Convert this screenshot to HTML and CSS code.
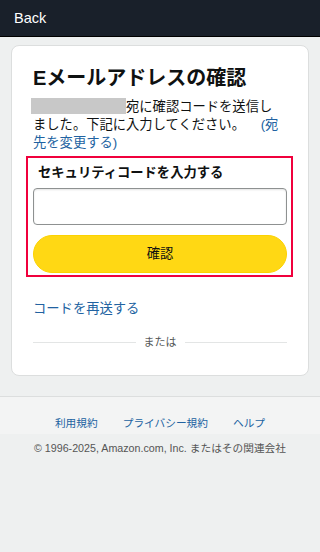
FILE: index.html
```html
<!DOCTYPE html>
<html lang="ja">
<head>
<meta charset="utf-8">
<meta name="viewport" content="width=device-width, initial-scale=1">
<title>Eメールアドレスの確認</title>
<link rel="stylesheet" href="styles.css">
</head>
<body>
<header class="topbar">
  <span class="back">Back</span>
</header>
<main class="page">
  <section class="card">
    <h1 class="title">Eメールアドレスの確認</h1>
    <p class="lead"><span class="redact"></span>宛に確認コードを送信しました。下記に入力してください。 <a class="link change" href="#">(宛先を変更する)</a></p>
    <div class="highlight">
      <label class="field-label" for="code">セキュリティコードを入力する</label>
      <input class="code-input" id="code" type="text">
      <button class="confirm" type="button">確認</button>
    </div>
    <a class="link resend" href="#">コードを再送する</a>
    <div class="divider"><span class="divider-text">または</span></div>
  </section>
</main>
<footer class="footer">
  <nav class="footer-links">
    <a class="link" href="#">利用規約</a>
    <a class="link" href="#">プライバシー規約</a>
    <a class="link" href="#">ヘルプ</a>
  </nav>
  <p class="copyright">© 1996-2025, Amazon.com, Inc. またはその関連会社</p>
</footer>
</body>
</html>
```

FILE: styles.css
```css
* { box-sizing: border-box; }
html, body { margin: 0; padding: 0; }
body {
  width: 320px;
  min-height: 552px;
  background: #eef0f0;
  font-family: "Liberation Sans", "Noto Sans CJK JP", sans-serif;
  color: #0f1111;
  font-size: 13.3px;
}
.topbar {
  height: 37px;
  background: #19202a;
  border-bottom: 1px solid #000;
  display: flex;
  align-items: center;
  padding-left: 14px;
}
.back {
  color: #fff;
  font-size: 14.5px;
  line-height: 18px;
}
.page {
  padding: 8px 11px 0 11px;
}
.card {
  background: #fff;
  border: 1px solid #dcdede;
  border-radius: 8px;
  padding: 20px 21px 24px 21px;
  display: flex;
  flex-direction: column;
}
.title {
  margin: 0;
  font-size: 20px;
  line-height: 24px;
  font-weight: 700;
}
.lead {
  margin: 8px 4px 0 0;
  font-size: 13.3px;
  line-height: 18px;
}
.redact {
  display: inline-block;
  width: 95px;
  height: 16px;
  margin-left: -2px;
  background: #c8c8c8;
  vertical-align: -3px;
}
.link {
  color: #2162a1;
  text-decoration: none;
}
.change {
  margin-left: 12px;
}
.highlight {
  margin: 4px -6px 0 -7px;
  border: 2px solid #f0003c;
  padding: 6px 4px 2px 5px;
  display: flex;
  flex-direction: column;
}
.field-label {
  font-weight: 700;
  font-size: 13.3px;
  line-height: 18px;
  padding-left: 5px;
}
.code-input {
  margin-top: 6px;
  height: 37px;
  border: 1px solid #8e9191;
  border-radius: 4px;
  box-shadow: inset 0 1px 2px rgba(15,17,17,0.12);
  font-size: 14px;
  padding: 0 8px;
  background: #fff;
}
.confirm {
  margin-top: 10px;
  height: 38px;
  border: 1px solid #fcd200;
  border-radius: 19px;
  background: #ffd814;
  color: #0f1111;
  font-family: inherit;
  font-size: 13.3px;
  line-height: 18px;
}
.resend {
  margin-top: 23px;
  line-height: 18px;
  font-size: 13.3px;
}
.divider {
  margin-top: 15px;
  display: flex;
  align-items: center;
  gap: 8px;
}
.divider::before, .divider::after {
  content: "";
  flex: 1;
  height: 1px;
  background: #e3e5e5;
}
.divider-text {
  color: #565959;
  font-size: 11px;
  line-height: 18px;
}
.footer {
  margin-top: 20px;
  border-top: 1px solid #dcdede;
}
.footer-links {
  background: #f3f4f4;
  height: 37px;
  display: flex;
  justify-content: center;
  align-items: flex-end;
  gap: 25px;
  padding-bottom: 4px;
  font-size: 10.7px;
  line-height: 14px;
}
.copyright {
  margin: 7px 0 0 0;
  text-align: center;
  color: #555;
  font-size: 10.7px;
  line-height: 14px;
}
```
